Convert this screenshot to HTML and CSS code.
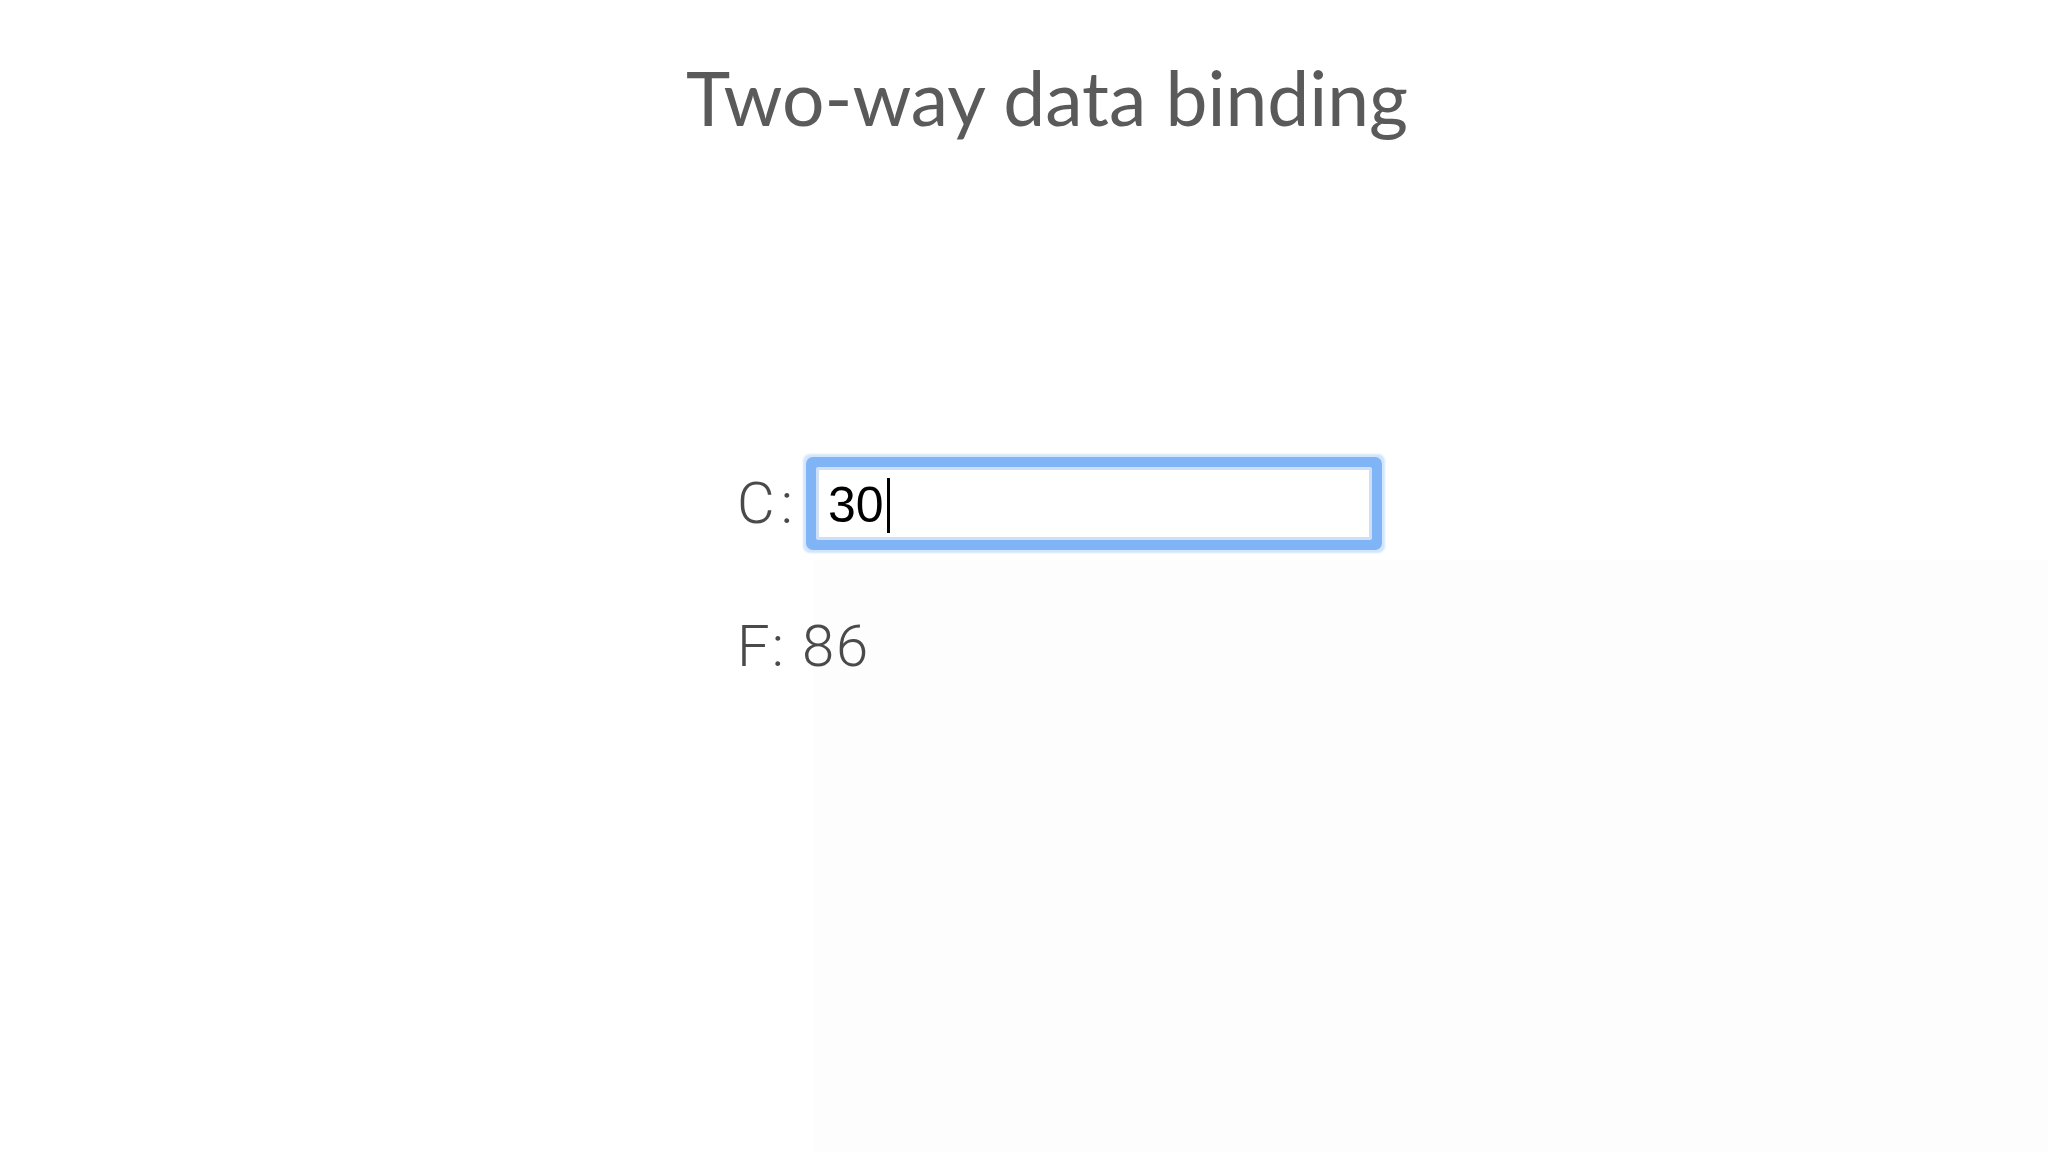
FILE: index.html
```html
<!DOCTYPE html>
<html lang="en">
<head>
<meta charset="utf-8">
<title>Two-way data binding</title>
<link rel="stylesheet" href="styles.css">
</head>
<body>
<header class="slide-header">
  <h1 class="slide-title">Two-way data binding</h1>
</header>
<main class="demo">
  <div class="field-row">
    <label class="field-label" for="celsius">C:</label>
    <div class="text-input" id="celsius"><span class="text-value">30</span><span class="caret"></span></div>
  </div>
  <div class="result-row">F: 86</div>
</main>
</body>
</html>
```

FILE: styles.css
```css
html, body {
  margin: 0;
  padding: 0;
}

body {
  width: 2048px;
  height: 1152px;
  overflow: hidden;
  background-color: #ffffff;
  background-image: linear-gradient(#fdfdfd, #fdfdfd);
  background-repeat: no-repeat;
  background-position: 813px 560px;
  background-size: 1235px 592px;
}

.slide-header {
  padding-top: 52px;
  padding-left: 46px;
  text-align: center;
}

.slide-title {
  margin: 0;
  font-family: "Lato", "Open Sans", sans-serif;
  font-weight: 400;
  font-size: 75px;
  line-height: 91px;
  color: #5a5a5a;
}

.demo {
  margin-left: 737px;
  padding-top: 324px;
  display: flex;
  flex-direction: column;
  align-items: flex-start;
}

.field-row {
  display: flex;
  align-items: center;
}

.field-label,
.result-row {
  font-family: "Roboto", "Liberation Sans", sans-serif;
  font-weight: 300;
  font-size: 58px;
  line-height: 67px;
  letter-spacing: 2px;
  color: #4a4a4a;
}

.field-label {
  flex: 0 0 auto;
  width: 79px;
  letter-spacing: 6px;
}

.text-input {
  box-sizing: border-box;
  width: 556px;
  height: 73px;
  padding: 3px 0 0 9px;
  display: flex;
  align-items: center;
  background: #ffffff;
  border: 3px solid #cfe0f6;
  border-radius: 2px;
  box-shadow: 0 0 0 10px #7fb4f6, 0 0 2px 13px #d3e5fb;
  font-family: "Liberation Sans", Arial, sans-serif;
  font-size: 50px;
  line-height: 56px;
  color: #000000;
}

.caret {
  display: inline-block;
  width: 3px;
  height: 55px;
  margin-left: 3px;
  background: #000000;
}

.result-row {
  margin-top: 73px;
}
```
